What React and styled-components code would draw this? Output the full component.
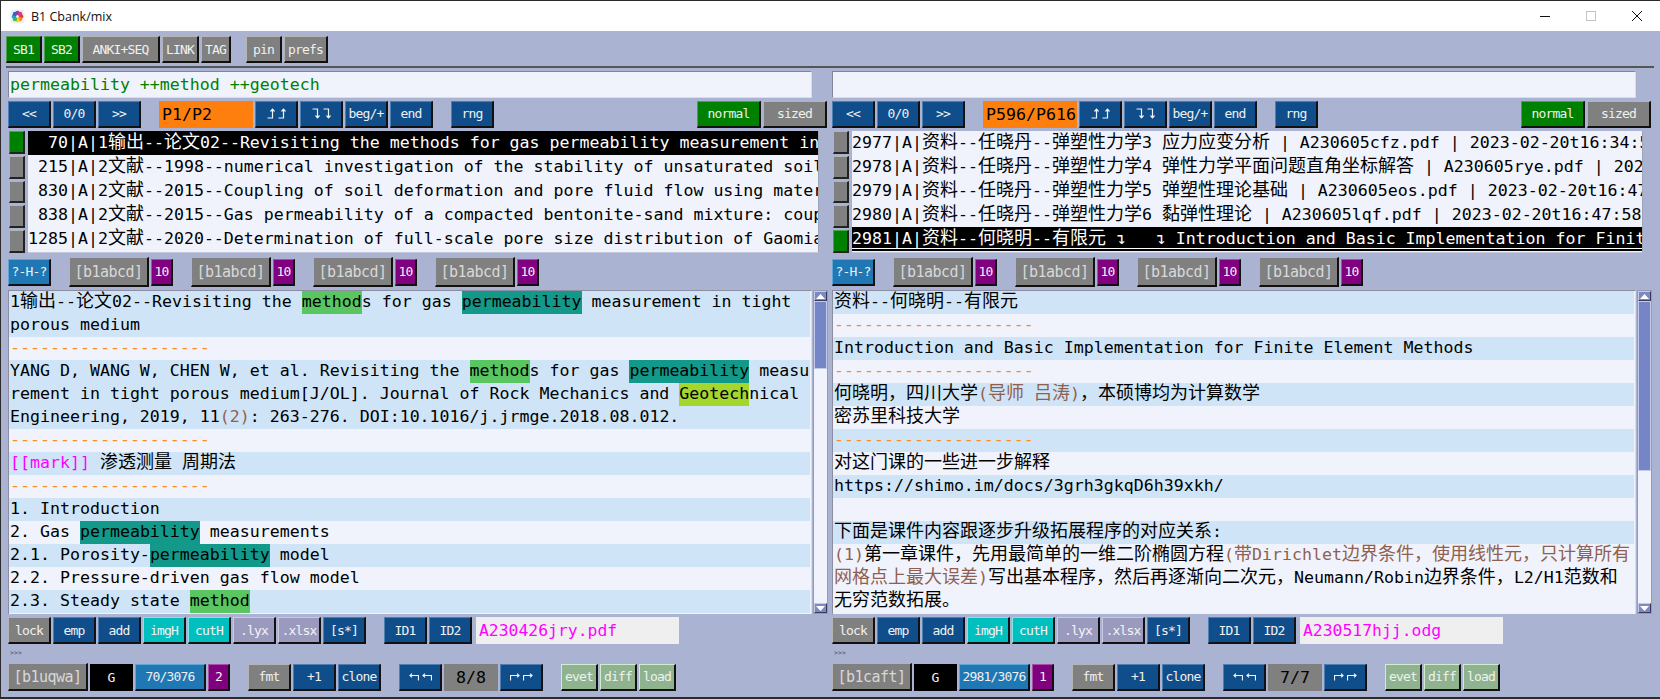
import React from 'react';
import styled, { createGlobalStyle } from 'styled-components';

const GlobalStyle = createGlobalStyle`
  html, body {
    margin: 0;
    padding: 0;
    background: #2b2b2b;
  }
  * {
    box-sizing: border-box;
  }
`;

const MONO = `"DejaVu Sans Mono", "Liberation Mono", "Noto Sans CJK SC", monospace`;

const TONES = {
  navy: { bg: '#104e8b', light: '#4f7fb0', fg: '#f0f0f0' },
  gray: { bg: '#808080', light: '#b4b4b4', fg: '#f0f0f0' },
  green: { bg: '#008000', light: '#4fa04f', fg: '#f0f0f0' },
  blue: { bg: '#1f77b4', light: '#5fa6d8', fg: '#f0f0f0' },
  purple: { bg: '#800080', light: '#a850a8', fg: '#f0f0f0' },
  teal: { bg: '#00bfbf', light: '#7fe6e6', fg: '#f4f4f4' },
  lilac: { bg: '#9a9abf', light: '#c9c9e4', fg: '#f4f4f4' },
  sage: { bg: '#8fb38f', light: '#d2ecd2', fg: '#eef4ee' },
};

const HITS = {
  method: '#5ac661',
  perm: '#12998a',
  geo: '#a4d62e',
};

const INK = {
  dash: '#ff8c1a',
  brown: '#8f5f4f',
  pink: '#ff00ff',
};

const Window = styled.div`
  width: 1660px;
  height: 699px;
  overflow: hidden;
  display: flex;
  flex-direction: column;
  padding: 1px 0 2px 1px;
  background: #2b2b2b;
`;

const TitleBar = styled.header`
  height: 30px;
  flex: none;
  display: flex;
  align-items: center;
  background: #ffffff;
  padding-left: 9px;
`;

const TitleText = styled.span`
  margin-left: 6px;
  font: 12.5px "Open Sans", "Noto Sans", sans-serif;
  color: #111111;
`;

const WindowButtons = styled.div`
  margin-left: auto;
  display: flex;
`;

const WindowButton = styled.div`
  width: 46px;
  height: 30px;
  display: flex;
  align-items: center;
  justify-content: center;
`;

const Body = styled.main`
  flex: 1;
  background: #aab4d2;
  display: flex;
  flex-direction: column;
  padding-top: 5px;
`;

const Toolbar = styled.div`
  display: flex;
  gap: 2px;
  padding-left: 5px;
  height: 27px;
`;

const Divider = styled.div`
  height: 2px;
  margin: 3px 6px 0 5px;
  background: #555555;
`;

const Panes = styled.div`
  display: grid;
  grid-template-columns: 824px 824px;
  padding-left: 7px;
  margin-top: 3px;
`;

const PaneBox = styled.section`
  display: flex;
  flex-direction: column;
`;

const Btn = styled.div`
  width: ${p => p.$w || 43}px;
  height: ${p => p.$h || 27}px;
  flex: none;
  margin-left: ${p => (p.$auto ? 'auto' : `${p.$ml || 0}px`)};
  display: flex;
  align-items: center;
  justify-content: center;
  gap: 3px;
  font-family: ${MONO};
  font-size: 13px;
  letter-spacing: -0.85px;
  white-space: pre;
  color: ${p => TONES[p.$tone].fg};
  background: ${p => TONES[p.$tone].bg};
  border-style: solid;
  border-width: 1px 2px 2px 1px;
  border-color: ${p => TONES[p.$tone].light} #111111 #111111 ${p => TONES[p.$tone].light};
`;

const TagBtn = styled(Btn)`
  font-size: 15px;
  letter-spacing: -0.55px;
  color: #d8d8d8;
`;

const Flat = styled.div`
  width: ${p => p.$w}px;
  height: ${p => p.$h || 27}px;
  flex: none;
  margin-left: ${p => p.$ml || 0}px;
  display: flex;
  align-items: center;
  justify-content: ${p => p.$left ? 'flex-start' : 'center'};
  padding-left: ${p => p.$left ? 3 : 0}px;
  font-family: ${MONO};
  font-size: ${p => p.$size || 16.6}px;
  color: ${p => p.$fg || '#000000'};
  background: ${p => p.$bg};
`;

const Entry = styled.div`
  width: 804px;
  height: 27px;
  padding-left: 1px;
  font-family: ${MONO};
  font-size: 16.6px;
  line-height: 26px;
  color: #008000;
  background: #f0f3fc;
  border-style: solid;
  border-width: 1px;
  border-color: #85859a #d8dcec #d8dcec #85859a;
`;

const BtnRow = styled.div`
  display: flex;
  align-items: center;
  gap: 2px;
  width: 819px;
  height: ${p => p.$h || 28}px;
  margin-top: ${p => p.$mt || 0}px;
`;

const ListArea = styled.div`
  display: flex;
  margin-top: 3px;
  height: 122px;
`;

const Checks = styled.div`
  display: grid;
  grid-template-rows: repeat(5, 1fr);
  gap: 2px;
  width: 16px;
  margin: 0 3px 0 1px;
`;

const Check = styled.div`
  background: ${p => (p.$on ? '#008000' : '#808080')};
  border-style: solid;
  border-width: 1px 2px 2px 1px;
  border-color: ${p => (p.$on ? '#4fa04f' : '#b4b4b4')} #222222 #222222 ${p => (p.$on ? '#4fa04f' : '#b4b4b4')};
`;

const ListBox = styled.div`
  width: 791px;
  background: #f0f3fc;
  border-right: 1px solid #a0a4b8;
  border-bottom: 1px solid #c4c8dc;
  overflow: hidden;
`;

const ListRow = styled.div`
  height: 24.1px;
  line-height: 24.8px;
  font-family: ${MONO};
  font-size: 16.6px;
  white-space: pre;
  overflow: hidden;
  color: ${p => (p.$active ? '#ffffff' : '#000000')};
  background: ${p => (p.$active ? '#000000' : 'transparent')};
  box-shadow: ${p => (p.$underline ? 'inset 0 -2px 0 #000000, inset 0 -3px 0 #ffffff' : 'none')};
`;

const Cjk = styled.span`
  font-family: "Noto Sans CJK SC", sans-serif;
  font-size: 18px;
  line-height: 0;
`;

const Reader = styled.div`
  display: flex;
  margin-top: 3px;
  height: 324px;
`;

const TextPanel = styled.div`
  width: 804px;
  padding: 0 1px 1px 0;
  background: #f0f3fc;
  border-style: solid;
  border-width: 1px 1px 0 1px;
  border-color: #8d8da2 #d8dcec #d8dcec #8d8da2;
  overflow: hidden;
`;

const TextLine = styled.div`
  background: ${p => (p.$shade ? '#cfe5f7' : 'transparent')};
`;

const TextRow = styled.div`
  height: 23px;
  line-height: 22px;
  padding-left: 1px;
  font-family: ${MONO};
  font-size: 16.6px;
  color: #000000;
  white-space: pre;
  overflow: hidden;
`;

const Hit = styled.span`
  display: inline-block;
  height: 23px;
  line-height: 22px;
  vertical-align: top;
  background: ${p => HITS[p.$kind]};
`;

const Ink = styled.span`
  color: ${p => INK[p.$kind]};
`;

const Scrollbar = styled.div`
  width: 15px;
  margin-left: 1px;
  display: flex;
  flex-direction: column;
  background: #f0f3fc;
  border: 1px solid #9a9aae;
`;

const ScrollStep = styled.div`
  height: 10px;
  flex: none;
  display: flex;
  align-items: center;
  justify-content: center;
  background: #7b89c9;
  border-style: solid;
  border-width: 1px;
  border-color: #c4cbe8 #3a3a5a #3a3a5a #c4cbe8;
`;

const ScrollThumb = styled.div`
  height: ${p => p.$h}px;
  flex: none;
  background: #7585c6;
  border: 1px solid #c4cbe8;
`;

const ScrollGap = styled.div`
  flex: 1;
`;

const Hint = styled.div`
  height: 19px;
  padding: 5px 0 0 2px;
  font-family: ${MONO};
  font-size: 6.6px;
  line-height: 8px;
  color: #4a5068;
`;

// text with CJK runs set a bit larger, so that one CJK char is 18px and one latin char 10px
const Mixed = ({ text }) =>
  text.split(/([\u2e80-\u9fff\uff00-\uffef]+)/).map((part, i) =>
    i % 2 ? <Cjk key={i}>{part}</Cjk> : part
  );

const Segments = ({ parts }) =>
  parts.map((part, i) => {
    if (typeof part === 'string') return <Mixed key={i} text={part} />;
    const [text, kind] = part;
    if (HITS[kind]) return <Hit key={i} $kind={kind}><Mixed text={text} /></Hit>;
    return <Ink key={i} $kind={kind}><Mixed text={text} /></Ink>;
  });

const HookV = ({ up }) => (
  <svg width="8" height="11" viewBox="0 0 8 11">
    <g fill="none" stroke="#f2f2f2" strokeWidth="1.2" transform={up ? undefined : 'translate(0 11) scale(1 -1)'}>
      <path d="M0.5 10H5.5V1.5" />
      <path d="M3.5 3.5L5.5 1.2L7.5 3.5" />
    </g>
  </svg>
);

const HookH = ({ right }) => (
  <svg width="10" height="8" viewBox="0 0 10 8">
    <g fill="none" stroke="#f2f2f2" strokeWidth="1.2" transform={right ? 'translate(10 0) scale(-1 1)' : undefined}>
      <path d="M1 2.5H9.5V7.5" />
      <path d="M3 0.6L1 2.5L3 4.4" />
    </g>
  </svg>
);

const AppIcon = () => (
  <svg width="15" height="15" viewBox="0 0 15 15">
    <rect x="0.5" y="0.5" width="14" height="14" rx="3" fill="#efefef" />
    {['#e8362b', '#f08a1d', '#f4d21f', '#4cb648', '#22a6c8', '#3a62c4', '#8a3fb0', '#d8388a'].map((c, i) => (
      <circle
        key={c}
        cx={7.5 + 3.6 * Math.cos((i * Math.PI) / 4)}
        cy={7.5 + 3.6 * Math.sin((i * Math.PI) / 4)}
        r="2.2"
        fill={c}
      />
    ))}
  </svg>
);

const DASHES = '--------------------';

const LEFT = {
  query: 'permeability ++method ++geotech',
  page: 'P1/P2',
  activeRow: 0,
  rows: [
    '  70|A|1输出--论文02--Revisiting the methods for gas permeability measurement in tight porous',
    ' 215|A|2文献--1998--numerical investigation of the stability of unsaturated soil slopes',
    ' 830|A|2文献--2015--Coupling of soil deformation and pore fluid flow using material point',
    ' 838|A|2文献--2015--Gas permeability of a compacted bentonite-sand mixture: coupled effects',
    '1285|A|2文献--2020--Determination of full-scale pore size distribution of Gaomiaozi bentonite',
  ],
  lines: [
    [
      ['1输出--论文02--Revisiting the ', ['method', 'method'], 's for gas ', ['permeability', 'perm'], ' measurement in tight'],
      ['porous medium'],
    ],
    [[[DASHES, 'dash']]],
    [
      ['YANG D, WANG W, CHEN W, et al. Revisiting the ', ['method', 'method'], 's for gas ', ['permeability', 'perm'], ' measu'],
      ['rement in tight porous medium[J/OL]. Journal of Rock Mechanics and ', ['Geotech', 'geo'], 'nical'],
      ['Engineering, 2019, 11', ['(2)', 'brown'], ': 263-276. DOI:10.1016/j.jrmge.2018.08.012.'],
    ],
    [[[DASHES, 'dash']]],
    [[['[[mark]]', 'pink'], ' 渗透测量 周期法']],
    [[[DASHES, 'dash']]],
    [['1. Introduction']],
    [['2. Gas ', ['permeability', 'perm'], ' measurements']],
    [['2.1. Porosity-', ['permeability', 'perm'], ' model']],
    [['2.2. Pressure-driven gas flow model']],
    [['2.3. Steady state ', ['method', 'method']]],
  ],
  thumb: 68,
  file: 'A230426jry.pdf',
  tag: '[b1uqwa]',
  position: '70/3076',
  count: '2',
  hist: '8/8',
};

const RIGHT = {
  query: '',
  page: 'P596/P616',
  activeRow: 4,
  rows: [
    '2977|A|资料--任晓丹--弹塑性力学3 应力应变分析 | A230605cfz.pdf | 2023-02-20t16:34:58',
    '2978|A|资料--任晓丹--弹塑性力学4 弹性力学平面问题直角坐标解答 | A230605rye.pdf | 2023-02-20t16:40:12',
    '2979|A|资料--任晓丹--弹塑性力学5 弹塑性理论基础 | A230605eos.pdf | 2023-02-20t16:47:30',
    '2980|A|资料--任晓丹--弹塑性力学6 黏弹性理论 | A230605lqf.pdf | 2023-02-20t16:47:58',
    '2981|A|资料--何晓明--有限元 ↴   ↴ Introduction and Basic Implementation for Finite Element Methods',
  ],
  lines: [
    [['资料--何晓明--有限元']],
    [[[DASHES, 'dash']]],
    [['Introduction and Basic Implementation for Finite Element Methods']],
    [[[DASHES, 'dash']]],
    [['何晓明，四川大学', ['(导师 吕涛)', 'brown'], '，本硕博均为计算数学']],
    [['密苏里科技大学']],
    [[[DASHES, 'dash']]],
    [['对这门课的一些进一步解释']],
    [['https://shimo.im/docs/3grh3gkqD6h39xkh/']],
    [['']],
    [['下面是课件内容跟逐步升级拓展程序的对应关系:']],
    [
      [['(1)', 'brown'], '第一章课件，先用最简单的一维二阶椭圆方程', ['(带Dirichlet边界条件，使用线性元，只计算所有', 'brown']],
      [['网格点上最大误差)', 'brown'], '写出基本程序，然后再逐渐向二次元，Neumann/Robin边界条件，L2/H1范数和'],
      ['无穷范数拓展。'],
    ],
  ],
  thumb: 170,
  file: 'A230517hjj.odg',
  tag: '[b1caft]',
  position: '2981/3076',
  count: '1',
  hist: '7/7',
};

const Tag = ({ ml }) => (
  <>
    <TagBtn $tone="gray" $w={80} $h={30} $ml={ml}>[b1abcd]</TagBtn>
    <Btn $tone="purple" $w={22}>10</Btn>
  </>
);

const Pane = ({ data }) => (
  <PaneBox>
    <Entry>{data.query}</Entry>

    <BtnRow $mt={2}>
      <Btn $tone="navy">{'<<'}</Btn>
      <Btn $tone="navy">0/0</Btn>
      <Btn $tone="navy">{'>>'}</Btn>
      <Flat $w={94} $ml={16} $bg="#ff7f0e" $left>{data.page}</Flat>
      <Btn $tone="navy"><HookV up /><HookV up /></Btn>
      <Btn $tone="navy"><HookV /><HookV /></Btn>
      <Btn $tone="navy">beg/+</Btn>
      <Btn $tone="navy">end</Btn>
      <Btn $tone="navy" $ml={16}>rng</Btn>
      <Btn $tone="green" $w={64} $auto>normal</Btn>
      <Btn $tone="gray" $w={64}>sized</Btn>
    </BtnRow>

    <ListArea>
      <Checks>
        {data.rows.map((row, i) => <Check key={i} $on={i === data.activeRow} />)}
      </Checks>
      <ListBox>
        {data.rows.map((row, i) => (
          <ListRow key={i} $active={i === data.activeRow} $underline={data === RIGHT && i === 4}>
            <Mixed text={row} />
          </ListRow>
        ))}
      </ListBox>
    </ListArea>

    <BtnRow $h={30} $mt={4}>
      <Btn $tone="blue">?-H-?</Btn>
      <Tag ml={16} />
      <Tag ml={16} />
      <Tag ml={16} />
      <Tag ml={16} />
    </BtnRow>

    <Reader>
      <TextPanel>
        {data.lines.map((rows, i) => (
          <TextLine key={i} $shade={i % 2 === 0}>
            {rows.map((parts, j) => (
              <TextRow key={j}><Segments parts={parts} /></TextRow>
            ))}
          </TextLine>
        ))}
      </TextPanel>
      <Scrollbar>
        <ScrollStep>
          <svg width="9" height="5" viewBox="0 0 9 5"><path d="M4.5 0L9 5H0Z" fill="#ffffff" /></svg>
        </ScrollStep>
        <ScrollThumb $h={data.thumb} />
        <ScrollGap />
        <ScrollStep>
          <svg width="9" height="5" viewBox="0 0 9 5"><path d="M4.5 5L9 0H0Z" fill="#ffffff" /></svg>
        </ScrollStep>
      </Scrollbar>
    </Reader>

    <BtnRow $h={27} $mt={3}>
      <Btn $tone="gray">lock</Btn>
      <Btn $tone="navy">emp</Btn>
      <Btn $tone="navy">add</Btn>
      <Btn $tone="teal">imgH</Btn>
      <Btn $tone="teal">cutH</Btn>
      <Btn $tone="lilac">.lyx</Btn>
      <Btn $tone="lilac">.xlsx</Btn>
      <Btn $tone="navy">[s*]</Btn>
      <Btn $tone="navy" $ml={16}>ID1</Btn>
      <Btn $tone="navy">ID2</Btn>
      <Flat $w={203} $ml={2} $bg="#efefef" $fg="#ff00ff" $left $size={16.4}>{data.file}</Flat>
    </BtnRow>

    <Hint>{'>>>'}</Hint>

    <BtnRow $h={28}>
      <TagBtn $tone="gray" $w={80} $h={28}>{data.tag}</TagBtn>
      <Flat $w={43} $h={27} $bg="#000000" $fg="#f0f0f0" $size={13}>G</Flat>
      <Btn $tone="blue" $w={71}>{data.position}</Btn>
      <Btn $tone="purple" $w={22}>{data.count}</Btn>
      <Btn $tone="gray" $ml={16}>fmt</Btn>
      <Btn $tone="navy">+1</Btn>
      <Btn $tone="navy">clone</Btn>
      <Btn $tone="navy" $ml={16}><HookH /><HookH /></Btn>
      <Flat $w={54} $bg="#808080" $size={16.6}>{data.hist}</Flat>
      <Btn $tone="navy"><HookH right /><HookH right /></Btn>
      <Btn $tone="sage" $w={37} $ml={16}>evet</Btn>
      <Btn $tone="sage" $w={37}>diff</Btn>
      <Btn $tone="sage" $w={37}>load</Btn>
    </BtnRow>
  </PaneBox>
);

export default function App() {
  return (
    <>
      <GlobalStyle />
      <Window>
        <TitleBar>
          <AppIcon />
          <TitleText>B1 Cbank/mix</TitleText>
          <WindowButtons>
            <WindowButton>
              <svg width="10" height="10" viewBox="0 0 10 10"><path d="M0 5.5H10" stroke="#111111" /></svg>
            </WindowButton>
            <WindowButton>
              <svg width="10" height="10" viewBox="0 0 10 10"><rect x="0.5" y="0.5" width="9" height="9" fill="none" stroke="#c4c4c4" /></svg>
            </WindowButton>
            <WindowButton>
              <svg width="10" height="10" viewBox="0 0 10 10"><path d="M0 0L10 10M10 0L0 10" stroke="#111111" /></svg>
            </WindowButton>
          </WindowButtons>
        </TitleBar>
        <Body>
          <Toolbar>
            <Btn $tone="green" $w={36}>SB1</Btn>
            <Btn $tone="green" $w={36}>SB2</Btn>
            <Btn $tone="gray" $w={78}>ANKI+SEQ</Btn>
            <Btn $tone="gray" $w={37}>LINK</Btn>
            <Btn $tone="gray" $w={30}>TAG</Btn>
            <Btn $tone="gray" $w={36} $ml={13}>pin</Btn>
            <Btn $tone="gray" $w={44}>prefs</Btn>
          </Toolbar>
          <Divider />
          <Panes>
            <Pane data={LEFT} />
            <Pane data={RIGHT} />
          </Panes>
        </Body>
      </Window>
    </>
  );
}
